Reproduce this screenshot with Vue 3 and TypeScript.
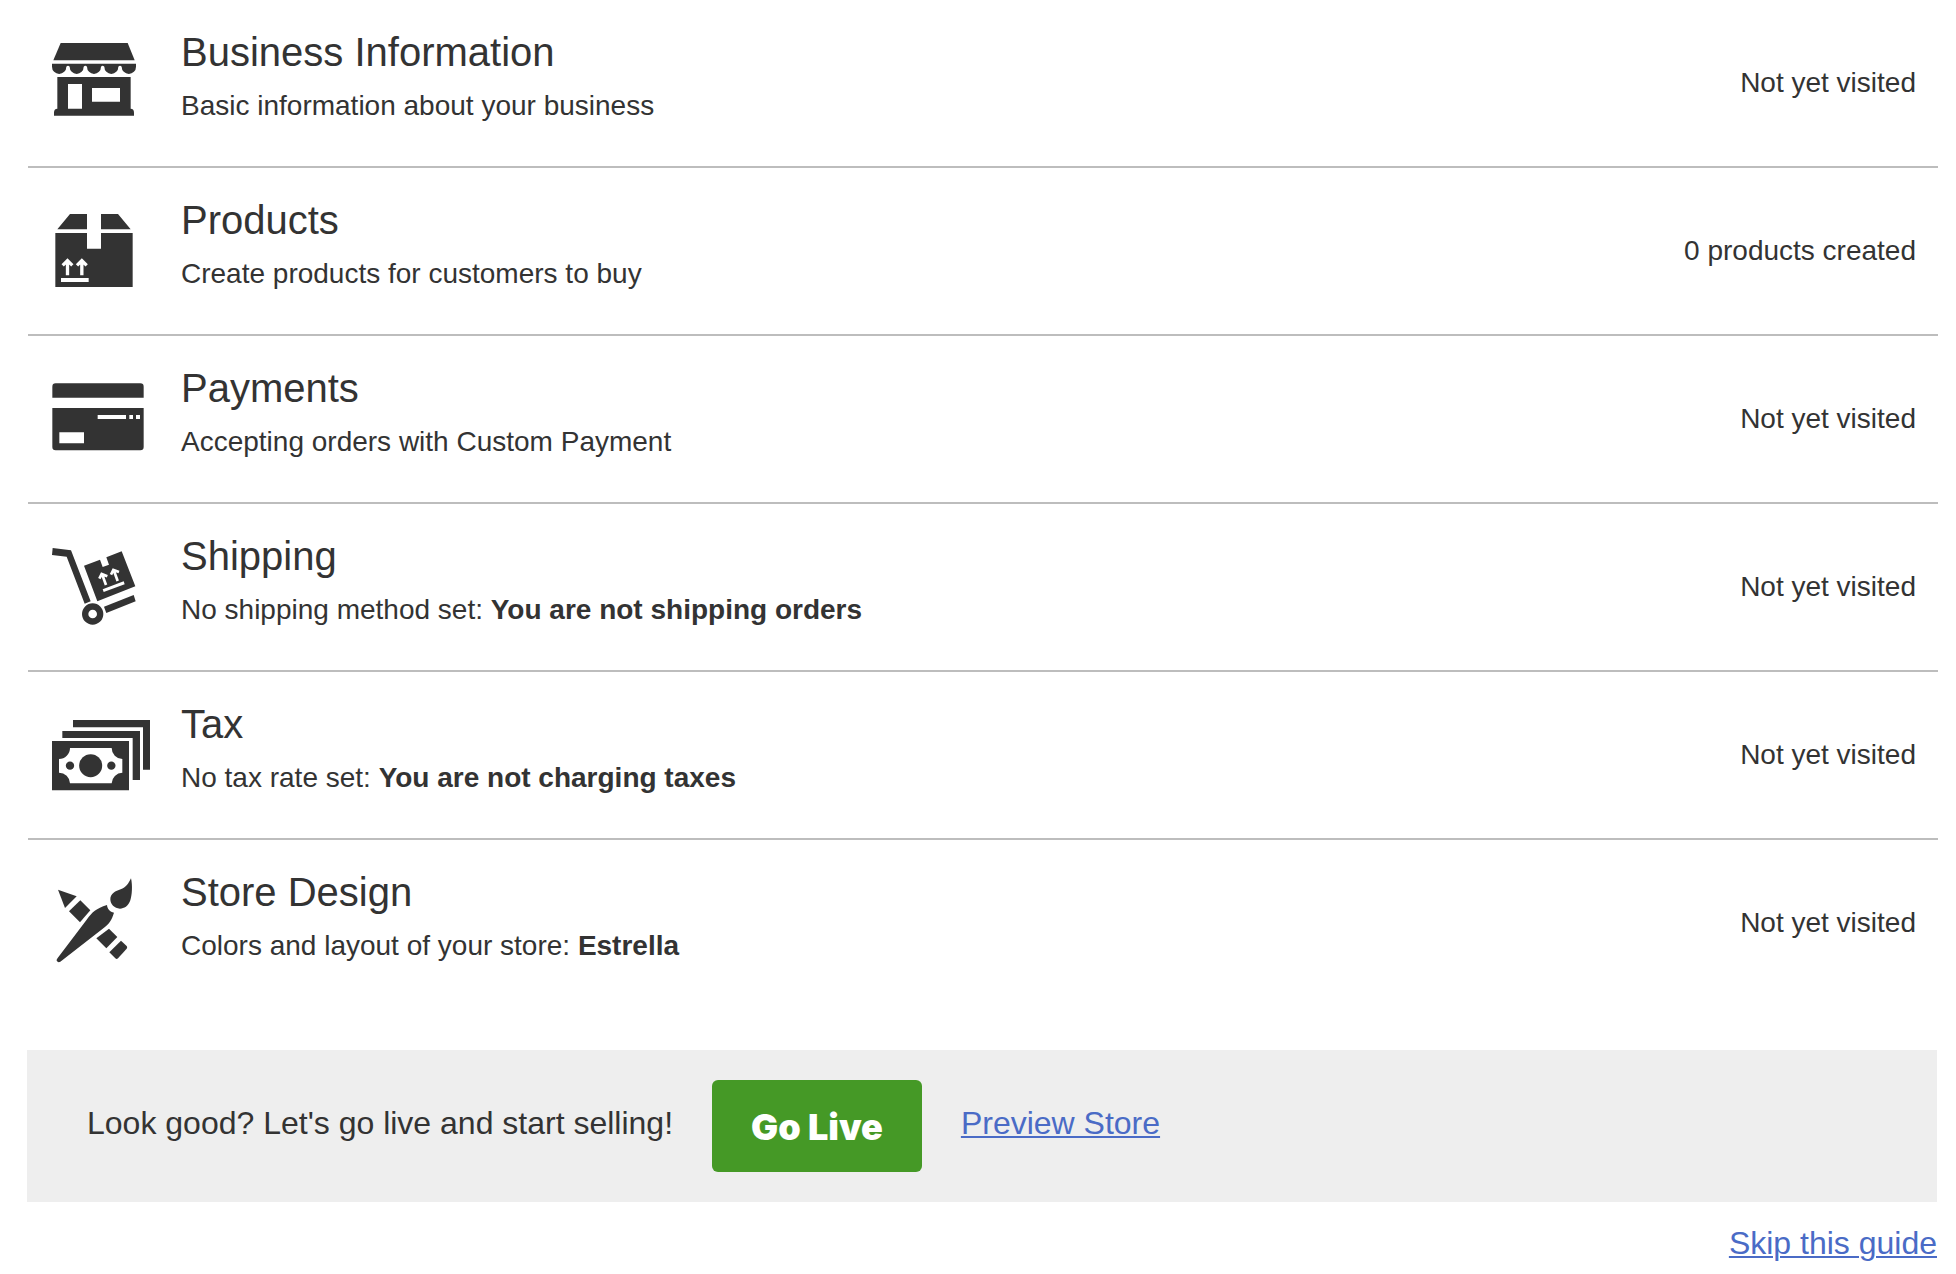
<script setup lang="ts">
type IconName = 'shop' | 'box' | 'card' | 'cart' | 'money' | 'design'

interface Step {
  icon: IconName
  viewBox: string
  title: string
  text: string
  strong?: string
  status: string
}

const steps: Step[] = [
  {
    icon: 'shop',
    viewBox: '90 45 306 288',
    title: 'Business Information',
    text: 'Basic information about your business',
    status: 'Not yet visited',
  },
  {
    icon: 'box',
    viewBox: '90 39 306 288',
    title: 'Products',
    text: 'Create products for customers to buy',
    status: '0 products created',
  },
  {
    icon: 'card',
    viewBox: '90 33 306 288',
    title: 'Payments',
    text: 'Accepting orders with Custom Payment',
    status: 'Not yet visited',
  },
  {
    icon: 'cart',
    viewBox: '90 42 306 288',
    title: 'Shipping',
    text: 'No shipping method set:',
    strong: 'You are not shipping orders',
    status: 'Not yet visited',
  },
  {
    icon: 'money',
    viewBox: '90 21 306 288',
    title: 'Tax',
    text: 'No tax rate set:',
    strong: 'You are not charging taxes',
    status: 'Not yet visited',
  },
  {
    icon: 'design',
    viewBox: '90 30 306 288',
    title: 'Store Design',
    text: 'Colors and layout of your store:',
    strong: 'Estrella',
    status: 'Not yet visited',
  },
]
</script>

<template>
  <main class="guide">
    <ul class="steps">
      <li v-for="step in steps" :key="step.icon" class="step">
        <svg class="icon" :viewBox="step.viewBox" aria-hidden="true">
          <g v-if="step.icon === 'shop'">
            <path d="M122 69H323L344 121H100Z" />
            <path
              d="M96 131H348V140a21.500 22 0 0 1-43 0q-5-5-10 0a21 22 0 0 1-42 0q-5-5-10 0a21 22 0 0 1-42 0q-5-5-10 0a21 22 0 0 1-42 0q-5-5-10 0a21.500 22 0 0 1-43 0Z"
            />
            <path
              fill-rule="evenodd"
              d="M112 171H332V266q10 0 10 12V287H102V278q0-12 10-12ZM144 192V266H186V192ZM216 204V245H300V204Z"
            />
          </g>
          <g v-else-if="step.icon === 'box'">
            <path d="M150 72H201V118H112ZM243 72H294L332 118H243Z" />
            <path d="M106 129H201V176H243V129H338V291H106Z" />
            <path class="cutout" d="M123 264H206V276H123Z" />
            <path class="arrow" stroke-width="10" d="M142.500 256V213M128 226L142.500 212L157 226M185.500 256V213M171 226L185.500 212L200 226" />
          </g>
          <g v-else-if="step.icon === 'card'">
            <path d="M97 113V80Q97 70 107 70H361Q371 70 371 80V113Z" />
            <path
              fill-rule="evenodd"
              d="M97 144H371V261Q371 271 361 271H107Q97 271 97 261ZM233 165V177H318V165ZM328 165V177H339V165ZM348 165V177H360V165ZM118 217V250H192V217Z"
            />
          </g>
          <g v-else-if="step.icon === 'cart'">
            <path d="M98 69L153 76L212 229L194 236L140 95L96 90Z" />
            <path
              fill-rule="evenodd"
              d="M186 267a32 32 0 1 0 64 0a32 32 0 1 0-64 0ZM205 267a13 13 0 1 0 26 0a13 13 0 1 0-26 0Z"
            />
            <path d="M252 245L341 210L347 229L259 264Z" />
            <path d="M192 122L240 104L248 126L267 119L259 97L305 79L346 184L232 229Z" />
            <path class="cutout" d="M248 193L311 169L314 178L251 201Z" />
            <path class="arrow" stroke-width="8" d="M258 180L246 147M238 161L245 147L262 154M293 168L281 135M273 149L280 135L297 141" />
          </g>
          <g v-else-if="step.icon === 'money'">
            <path
              fill-rule="evenodd"
              d="M96 123H327V271H96ZM150 144A33 33 0 0 1 117 177V218A33 33 0 0 1 150 250H275A33 33 0 0 1 307 218V177A33 33 0 0 1 275 144Z"
            />
            <circle cx="212" cy="197" r="34.500" />
            <circle cx="150" cy="197" r="12.500" />
            <circle cx="274" cy="197" r="12.500" />
            <path d="M127 93H360V240H338V114H127Z" />
            <path d="M159 60H390V209H369V82H159Z" />
          </g>
          <g v-else>
            <path d="M114 74L170 94L135 129Z" />
            <path d="M181 106L211 136L180 172L147 139Z" />
            <path d="M267 191L292 216L259 250L229 220Z" />
            <path d="M303 227L320 243Q323 247 320 251L294 280Q290 284 286 280L268 262Z" />
            <path
              d="M261 120C262 132 270 141 282 143C275 165 268 176 252 188L121 290Q114 294 110 287Q109 284 113 279L200 164C217 141 228 131 261 120Z"
            />
            <path
              d="M333 40C338 62 336 90 331 106C325 124 312 131 300 131C283 131 271 117 271 103C271 85 287 78 302 73C318 67 326 55 333 40Z"
            />
          </g>
        </svg>
        <div class="body">
          <h2 class="title">{{ step.title }}</h2>
          <p class="text">
            {{ step.text }}
            <strong v-if="step.strong">{{ step.strong }}</strong>
          </p>
        </div>
        <span class="status">{{ step.status }}</span>
      </li>
    </ul>

    <section class="launch">
      <p class="prompt">Look good? Let's go live and start selling!</p>
      <button class="go-live" type="button">Go Live</button>
      <a class="preview" href="#preview">Preview Store</a>
    </section>

    <div class="skip">
      <a href="#skip">Skip this guide</a>
    </div>
  </main>
</template>

<style>
body {
  margin: 0;
  background: #fff;
}
</style>

<style scoped>
.guide {
  color: #333;
  font-family: "Liberation Sans", Arial, Helvetica, sans-serif;
}

.steps {
  margin: 0 18px 0 28px;
  padding: 0;
  list-style: none;
}

.step {
  display: flex;
  align-items: center;
  padding: 28px 22px 42px;
  border-bottom: 2px solid #bdbdbd;
}

.step:last-child {
  border-bottom: 0;
}

.icon {
  flex: none;
  width: 102px;
  height: 96px;
  margin: 6px 29px -8px 0;
  fill: #333;
}

.cutout {
  fill: #fff;
}

.arrow {
  fill: none;
  stroke: #fff;
}

.body {
  flex: 1;
}

.title {
  margin: 0 0 12px;
  font-size: 40px;
  font-weight: 400;
  line-height: 48px;
}

.text {
  margin: 0;
  font-size: 28px;
  line-height: 36px;
}

.status {
  margin-top: 14px;
  font-size: 28px;
  line-height: 36px;
}

.launch {
  display: flex;
  align-items: center;
  margin: 44px 19px 0 27px;
  padding: 30px 60px;
  background: #eee;
  font-size: 32px;
  line-height: 40px;
}

.prompt {
  margin: 0;
  padding-bottom: 6px;
}

.go-live {
  height: 92px;
  margin: 0 39px;
  padding: 2px 39px 0;
  border: 0;
  border-radius: 6px;
  background: #459926;
  color: #fff;
  font-family: Inter, "Liberation Sans", sans-serif;
  font-size: 36px;
  font-weight: 900;
  line-height: 40px;
}

.preview {
  padding-bottom: 6px;
}

.skip {
  margin: 21px 19px 0 27px;
  font-size: 32px;
  line-height: 40px;
  text-align: right;
}

a {
  color: #4a6bc6;
  text-decoration: underline;
  text-decoration-thickness: 2px;
  text-underline-offset: 2px;
}
</style>
